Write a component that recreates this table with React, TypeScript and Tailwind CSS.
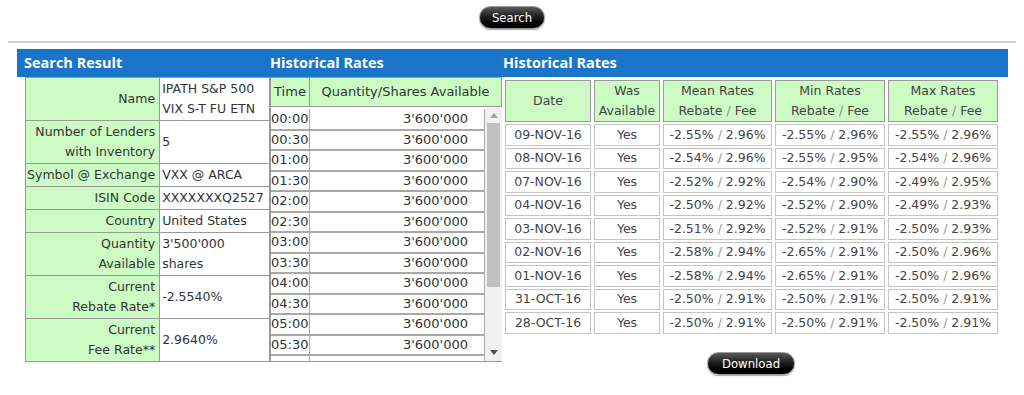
import React from "react";

const leftRows: { label: string[]; value: string[] }[] = [
  { label: ["Name"], value: ["IPATH S&P 500", "VIX S-T FU ETN"] },
  { label: ["Number of Lenders", "with Inventory"], value: ["5"] },
  { label: ["Symbol @ Exchange"], value: ["VXX @ ARCA"] },
  { label: ["ISIN Code"], value: ["XXXXXXXQ2527"] },
  { label: ["Country"], value: ["United States"] },
  { label: ["Quantity", "Available"], value: ["3'500'000", "shares"] },
  { label: ["Current", "Rebate Rate*"], value: ["-2.5540%"] },
  { label: ["Current", "Fee Rate**"], value: ["2.9640%"] },
];

const times: string[] = [];
for (let h = 0; h < 6; h++) {
  const hh = h.toString().padStart(2, "0");
  times.push(`${hh}:00`, `${hh}:30`);
}

const hist = [
  ["09-NOV-16", "-2.55%", "2.96%", "-2.55%", "2.96%", "-2.55%", "2.96%"],
  ["08-NOV-16", "-2.54%", "2.96%", "-2.55%", "2.95%", "-2.54%", "2.96%"],
  ["07-NOV-16", "-2.52%", "2.92%", "-2.54%", "2.90%", "-2.49%", "2.95%"],
  ["04-NOV-16", "-2.50%", "2.92%", "-2.52%", "2.90%", "-2.49%", "2.93%"],
  ["03-NOV-16", "-2.51%", "2.92%", "-2.52%", "2.91%", "-2.50%", "2.93%"],
  ["02-NOV-16", "-2.58%", "2.94%", "-2.65%", "2.91%", "-2.50%", "2.96%"],
  ["01-NOV-16", "-2.58%", "2.94%", "-2.65%", "2.91%", "-2.50%", "2.96%"],
  ["31-OCT-16", "-2.50%", "2.91%", "-2.50%", "2.91%", "-2.50%", "2.91%"],
  ["28-OCT-16", "-2.50%", "2.91%", "-2.50%", "2.91%", "-2.50%", "2.91%"],
];

function Pill({ label, w }: { label: string; w: string }) {
  return (
    <button
      className={`${w} h-[23px] rounded-full border border-[#9a9a9a] bg-gradient-to-b from-[#5a5a5a] via-[#1a1a1a] to-[#000] text-white text-[13px] leading-none shadow-[0_1px_1px_rgba(0,0,0,0.35)] [font-family:'DejaVu_Sans_Condensed','DejaVu_Sans',sans-serif]`}
    >
      {label}
    </button>
  );
}

function Rate({ a, b }: { a: string; b: string }) {
  return (
    <>
      {a} <span className="text-[#999]">/</span> {b}
    </>
  );
}

function Scrollbar() {
  return (
    <div className="w-[17px] bg-[#f1f1f1] flex flex-col items-center">
      <div className="h-[15px] w-full flex items-center justify-center">
        <svg width="8" height="5" viewBox="0 0 8 5">
          <path d="M0 5 L4 0 L8 5 Z" fill="#a3a3a3" />
        </svg>
      </div>
      <div className="w-[13px] h-[164px] bg-[#c1c1c1]" />
      <div className="flex-1" />
      <div className="h-[17px] w-full flex items-center justify-center">
        <svg width="8" height="5" viewBox="0 0 8 5">
          <path d="M0 0 L4 5 L8 0 Z" fill="#505050" />
        </svg>
      </div>
    </div>
  );
}

export default function App() {
  return (
    <div className="w-[1024px] h-[395px] bg-white text-[#333] [font-family:'DejaVu_Sans',Verdana,sans-serif] overflow-hidden">
      <div className="flex justify-center pt-[6px]">
        <Pill label="Search" w="w-[66px]" />
      </div>
      <div className="mx-[8px] mt-[12px] h-[2px] bg-[#cfcfcf]" />
      <div className="ml-[17px] w-[991px] mt-[6px]">
        <div className="flex h-[28px] items-center bg-[#1a75c9] text-white font-bold text-[14.5px] [font-family:'Open_Sans',sans-serif]">
          <div className="w-[253px] pl-[7px]">Search Result</div>
          <div className="w-[233px]">Historical Rates</div>
          <div className="flex-1">Historical Rates</div>
        </div>
        <div className="flex">
          {/* Left */}
          <div className="w-[253px] pl-[8px]">
            <table className="border-collapse text-[12.5px] leading-[20px]">
              <tbody>
                {leftRows.map((r, i) => (
                  <tr key={i}>
                    <td className="w-[136px] border border-[#999] bg-[#ccfcc4] text-right align-middle pr-[4px] py-[1px]">
                      {r.label.map((l, j) => (
                        <div key={j}>{l}</div>
                      ))}
                    </td>
                    <td className="w-[110px] border border-[#999] bg-white text-left align-middle pl-[2px] py-[1px] whitespace-nowrap">
                      {r.value.map((l, j) => (
                        <div key={j}>{l}</div>
                      ))}
                    </td>
                  </tr>
                ))}
              </tbody>
            </table>
          </div>
          {/* Middle */}
          <div className="w-[232px] text-[13px]">
            <div className="flex h-[30px] border border-[#999] bg-[#ccfcc4] items-center">
              <div className="w-[39px] h-full flex items-center justify-center border-r border-[#999]">Time</div>
              <div className="flex-1 text-center">Quantity/Shares Available</div>
            </div>
            <div className="h-[254px] flex border-l border-b border-[#999] mt-[1px]">
              <div className="flex-1 overflow-hidden pt-[1px]">
                <table className="w-full border-collapse leading-[18px]">
                  <tbody>
                    {times.map((t) => (
                      <tr key={t} className="h-[20.5px]">
                        <td className="w-[38px] border-b-2 border-r border-[#a8a8a8] pl-0 py-0">{t}</td>
                        <td className="border-b-2 border-r border-[#a8a8a8] text-right pr-[16px] py-0">3'600'000</td>
                      </tr>
                    ))}
                    <tr className="h-[8px]">
                      <td className="border-r border-[#a8a8a8]" />
                      <td className="border-r border-[#a8a8a8]" />
                    </tr>
                  </tbody>
                </table>
              </div>
              <Scrollbar />
            </div>
          </div>
          {/* Right */}
          <div className="flex-1 pt-[1px]">
            <table className="border-separate border-spacing-x-[3px] border-spacing-y-[2px] text-[12.5px] text-[#444] text-center">
              <thead>
                <tr className="h-[41px]">
                  <th className="w-[86px] font-normal border border-[#999] bg-[#ccfcc4] leading-[20px]">Date</th>
                  <th className="w-[66px] font-normal border border-[#999] bg-[#ccfcc4] leading-[20px]">
                    Was<br />Available
                  </th>
                  <th className="w-[109px] font-normal border border-[#999] bg-[#ccfcc4] leading-[20px]">
                    Mean Rates<br />Rebate <span className="text-[#888]">/</span> Fee
                  </th>
                  <th className="w-[110px] font-normal border border-[#999] bg-[#ccfcc4] leading-[20px]">
                    Min Rates<br />Rebate <span className="text-[#888]">/</span> Fee
                  </th>
                  <th className="w-[110px] font-normal border border-[#999] bg-[#ccfcc4] leading-[20px]">
                    Max Rates<br />Rebate <span className="text-[#888]">/</span> Fee
                  </th>
                </tr>
              </thead>
              <tbody>
                {hist.map((r) => (
                  <tr key={r[0]} className="h-[21.5px]">
                    <td className="border border-[#c4c4c4] leading-[18px] p-0">{r[0]}</td>
                    <td className="border border-[#c4c4c4] leading-[18px] p-0">Yes</td>
                    <td className="border border-[#c4c4c4] leading-[18px] p-0">
                      <Rate a={r[1]} b={r[2]} />
                    </td>
                    <td className="border border-[#c4c4c4] leading-[18px] p-0">
                      <Rate a={r[3]} b={r[4]} />
                    </td>
                    <td className="border border-[#c4c4c4] leading-[18px] p-0">
                      <Rate a={r[5]} b={r[6]} />
                    </td>
                  </tr>
                ))}
              </tbody>
            </table>
            <div className="flex justify-center pr-[8px] mt-[16px]">
              <Pill label="Download" w="w-[88px]" />
            </div>
          </div>
        </div>
      </div>
    </div>
  );
}
